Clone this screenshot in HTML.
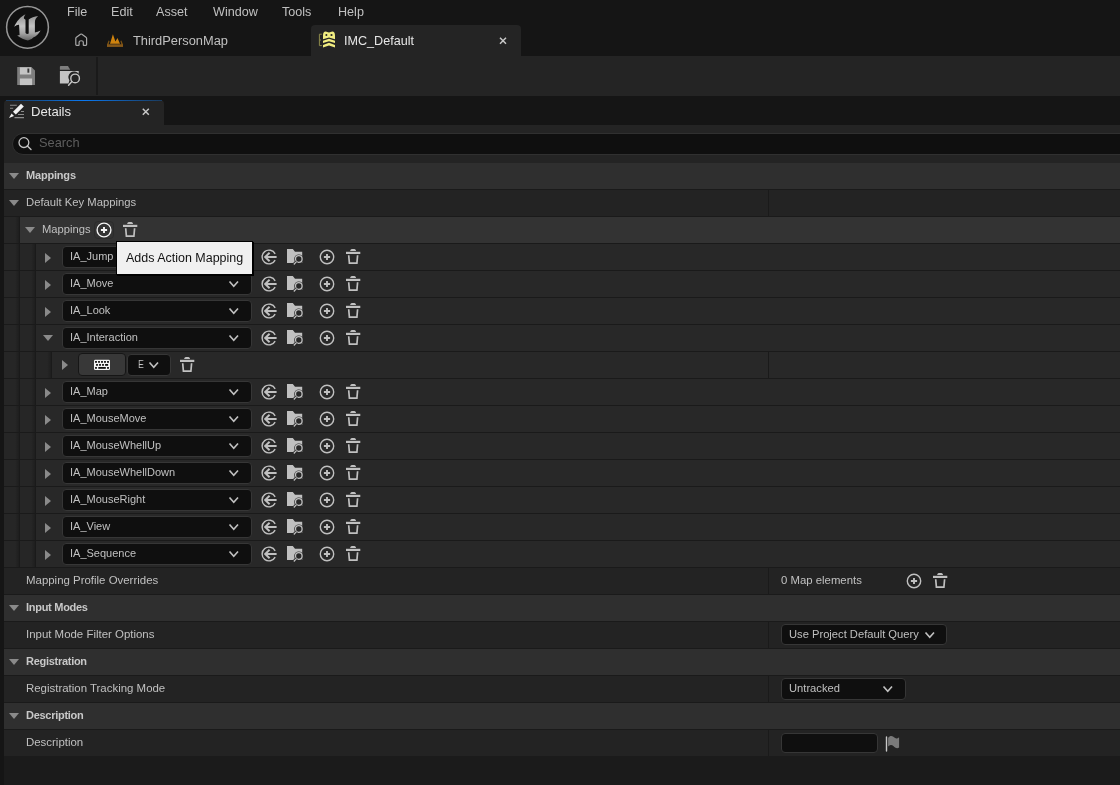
<!DOCTYPE html>
<html><head><meta charset="utf-8">
<style>
*{margin:0;padding:0;box-sizing:border-box}
html,body{width:1120px;height:785px;overflow:hidden;background:#151515;font-family:"Liberation Sans",sans-serif;color:#c0c0c0}
.a{position:absolute}
.t{position:absolute;white-space:nowrap;line-height:1;font-family:"Liberation Sans",sans-serif;will-change:transform}
svg{overflow:visible}
</style></head>
<body>
<div class="a" style="left:0px;top:0px;width:1120px;height:56px;background:#151515;"></div>
<div class="a" style="left:0px;top:56px;width:1120px;height:40px;background:#242424;"></div>
<div class="a" style="left:0px;top:96px;width:1120px;height:29px;background:#151515;"></div>
<div class="a" style="left:4px;top:125px;width:1116px;height:632px;background:#242424;"></div>
<div class="a" style="left:4px;top:756px;width:1116px;height:29px;background:#1b1b1b;"></div>
<svg class="a" style="left:0;top:0" width="56" height="56" viewBox="0 0 56 56">
<defs><linearGradient id="ug" x1="0" y1="0" x2="0" y2="1"><stop offset="0" stop-color="#8c8c8c"/><stop offset="0.45" stop-color="#c4c4c4"/><stop offset="0.72" stop-color="#a4a4a4"/><stop offset="1" stop-color="#626262"/></linearGradient></defs>
<circle cx="27.5" cy="27.3" r="20.9" fill="#101010" stroke="#979797" stroke-width="1.5"/>
<path d="M14.2,26.7 C16.5,21.5 20.5,16.5 25.5,14.2 C24.3,15.8 23.8,17.2 23.9,18.5 L25.5,19.8 L25.5,33 C26.5,34.2 27.8,34.2 28.7,33.5 L28.7,19.6 C31,17.5 34.5,16.3 38.1,15.9 C36,17.8 35,19.5 34.9,22 L34.9,32.4 C36.8,32 38.8,31.3 40.6,30.4 C38.5,33.8 35.8,36.5 33.6,37.3 L31.6,38.9 L27.9,40.6 C24.5,39.8 20.5,38.2 17.2,35.6 C18,35.3 18.8,35 19.6,34.9 L19.1,25.2 C18.8,24.2 16.5,25 14.2,26.7 Z" fill="url(#ug)"/>
</svg>
<div class="t" style="left:67px;top:6.33px;font-size:12.6px;color:#c0c0c0;">File</div>
<div class="t" style="left:111px;top:6.33px;font-size:12.6px;color:#c0c0c0;">Edit</div>
<div class="t" style="left:156px;top:6.33px;font-size:12.6px;color:#c0c0c0;">Asset</div>
<div class="t" style="left:213px;top:6.33px;font-size:12.6px;color:#c0c0c0;">Window</div>
<div class="t" style="left:282px;top:6.33px;font-size:12.6px;color:#c0c0c0;">Tools</div>
<div class="t" style="left:338px;top:6.33px;font-size:12.6px;color:#c0c0c0;">Help</div>
<svg class="a" style="left:70px;top:28px" width="24" height="24" viewBox="70 28 24 24">
<path d="M76.5,45.3 C75.9,45.3 75.8,45 75.8,44.5 V38.3 C75.8,37.8 76,37.5 76.4,37.2 L80.5,34.2 C81,33.9 81.4,33.9 81.9,34.2 L86,37.2 C86.4,37.5 86.6,37.8 86.6,38.3 V44.5 C86.6,45 86.5,45.3 85.9,45.3 H83.8 C83.4,45.3 83.3,45.1 83.3,44.7 V42 C83.3,40.3 79.1,40.3 79.1,42 V44.7 C79.1,45.1 79,45.3 78.6,45.3 Z" fill="none" stroke="#a8a8a8" stroke-width="1.2"/>
</svg>
<svg class="a" style="left:104px;top:30px" width="22" height="20" viewBox="104 30 22 20">
<path d="M110,43.7 L112.9,34.2 L115.4,41.6 L117.5,37.9 L120,43.7 Z" fill="#cf830e"/>
<path d="M107,46.8 L107,44.4 L108.6,40.6 L109.6,40.9 L108.6,44.5 H121.4 L120.4,40.9 L121.4,40.6 L123,44.4 V46.8 Z" fill="#7c5212"/>
<rect x="107" y="44.5" width="16" height="2.3" fill="#85581a"/>
</svg>
<div class="t" style="left:133px;top:35.12px;font-size:12.85px;color:#c0c0c0;">ThirdPersonMap</div>
<div class="a" style="left:311px;top:25px;width:210px;height:31px;background:#242424;border-radius:4px 4px 0 0;"></div>
<svg class="a" style="left:316px;top:29px" width="22" height="21" viewBox="316 29 22 21">
<path d="M321.8,34.2 H319.4 V45.6 H321.8 M319.4,40 H321" fill="none" stroke="#8e8b4c" stroke-width="1"/>
<path d="M323,39.2 L323,35.5 C323,33 324,31.6 325.6,31.6 C327,31.6 327.5,32.6 329,32.6 C330.5,32.6 331,31.6 332.4,31.6 C334,31.6 335,33 335,35.5 L335,39.2 L329,37.4 Z" fill="#f0ec80"/>
<circle cx="326.4" cy="35" r="1" fill="#242424"/><circle cx="331.5" cy="35" r="1.1" fill="#242424"/>
<path d="M323,40.7 L329,38.8 L335,40.7 L335,43.1 L329,41.3 L323,43.1 Z" fill="#f0ec80"/>
<path d="M323,44.9 L329,42.8 L335,44.9 L335,47.4 L329,45.5 L323,47.4 Z" fill="#f0ec80"/>
</svg>
<div class="t" style="left:344px;top:35.33px;font-size:12.6px;color:#e6e6e6;">IMC_Default</div>
<svg class="a" style="left:498px;top:36px" width="10" height="10" viewBox="498 36 10 10">
<path d="M500,37.7 L506,43.7 M506,37.7 L500,43.7" stroke="#c8c8c8" stroke-width="1.5"/>
</svg>
<svg class="a" style="left:14px;top:64px" width="72" height="26" viewBox="14 64 72 26">
<path d="M17.2,67 H31.4 L35,70.6 V85.1 H17.2 Z" fill="#7e7e7e"/>
<rect x="19.9" y="67.3" width="11.3" height="7.2" fill="#c4c4c4"/>
<rect x="27.4" y="68.5" width="1.9" height="4.2" fill="#3a3a3a"/>
<rect x="19.9" y="78.5" width="12.2" height="6.6" fill="#c4c4c4"/>
<path d="M59.9,69.8 V66.8 C59.9,66.3 60.2,66 60.7,66 H68 L70.2,69.8 Z" fill="#7e7e7e"/>
<path d="M59.9,70.9 H78.7 V73.8 A5.6,5.6 0 0 0 69.4,80.5 L68.5,83.5 H59.9 Z" fill="#c4c4c4"/>
<circle cx="75.1" cy="78.4" r="4.3" fill="none" stroke="#c4c4c4" stroke-width="1.4"/>
<path d="M71.9,81.6 L68.6,85.2" stroke="#c4c4c4" stroke-width="1.5" stroke-linecap="round"/>
</svg>
<div class="a" style="left:96px;top:57px;width:2px;height:38px;background:#1a1a1a;"></div>
<div class="a" style="left:4px;top:100px;width:160px;height:25px;background:#242424;border-radius:4px 4px 0 0;"></div>
<div class="a" style="left:6px;top:100px;width:156px;height:1px;background:linear-gradient(90deg,#1b3b5e 0%,#0a78f0 50%,#1b3b5e 100%);"></div>
<svg class="a" style="left:6px;top:101px" width="22" height="22" viewBox="6 101 22 22">
<path d="M10,105.2 H16.8 M10,108.3 H13.2 M21,111.5 H24 M18,114.5 H24 M14.5,117.6 H24" stroke="#8c8c8c" stroke-width="1.1"/>
<path d="M13,111.8 L21,103.8 L23.8,106.6 L15.8,114.6 Z" fill="#f2f2f2"/>
<path d="M11.6,113.6 L14,116 L9,117.9 Z" fill="#f2f2f2"/>
</svg>
<div class="t" style="left:31px;top:105.11px;font-size:13.1px;color:#e8e8e8;">Details</div>
<svg class="a" style="left:140px;top:106px" width="12" height="12" viewBox="140 106 12 12">
<path d="M142.8,108.7 L148.8,114.7 M148.8,108.7 L142.8,114.7" stroke="#c8c8c8" stroke-width="1.5"/>
</svg>
<div class="a" style="left:12px;top:133px;width:1130px;height:22px;background:#0f0f0f;border:1px solid #303030;border-radius:11px;box-sizing:border-box;"></div>
<svg class="a" style="left:14px;top:134px" width="22" height="20" viewBox="14 134 22 20">
<circle cx="23.9" cy="142.6" r="4.9" fill="none" stroke="#c4c4c4" stroke-width="1.3"/>
<path d="M27.4,146.1 L31,149.6" stroke="#c4c4c4" stroke-width="1.4" stroke-linecap="round"/>
</svg>
<div class="t" style="left:39px;top:136.76px;font-size:12.8px;color:#5e5e5e;">Search</div>
<div class="a" style="left:4px;top:163px;width:1116px;height:26px;background:#2f2f2f;"></div>
<div class="a" style="left:4px;top:189px;width:1116px;height:1px;background:#1a1a1a;"></div>
<svg class="a" style="left:9px;top:173px" width="10" height="6" viewBox="0 0 10 6"><path d="M0,0 H10 L5,6 Z" fill="#8a8a8a"/></svg>
<div class="t" style="left:26px;top:169.69px;font-size:11px;color:#c8c8c8;font-weight:700;letter-spacing:-0.19px;">Mappings</div>
<div class="a" style="left:4px;top:190px;width:1116px;height:26px;background:#232323;"></div>
<div class="a" style="left:4px;top:216px;width:1116px;height:1px;background:#1a1a1a;"></div>
<div class="a" style="left:768px;top:190px;width:1px;height:26px;background:#1a1a1a;"></div>
<svg class="a" style="left:9px;top:200px" width="10" height="6" viewBox="0 0 10 6"><path d="M0,0 H10 L5,6 Z" fill="#8a8a8a"/></svg>
<div class="t" style="left:26px;top:197.05px;font-size:11.28px;color:#c0c0c0;">Default Key Mappings</div>
<div class="a" style="left:4px;top:217px;width:16px;height:27px;background:linear-gradient(90deg,#262626 0%,#262626 70%,#1c1c1c 100%);"></div>
<div class="a" style="left:19px;top:217px;width:1px;height:27px;background:#1a1a1a;"></div>
<div class="a" style="left:4px;top:243px;width:16px;height:1px;background:#1a1a1a;"></div>
<div class="a" style="left:20px;top:217px;width:1100px;height:26px;background:#333333;"></div>
<div class="a" style="left:20px;top:243px;width:1100px;height:1px;background:#1a1a1a;"></div>
<svg class="a" style="left:25px;top:227px" width="10" height="6" viewBox="0 0 10 6"><path d="M0,0 H10 L5,6 Z" fill="#8a8a8a"/></svg>
<div class="t" style="left:42px;top:223.52px;font-size:11.2px;color:#c0c0c0;">Mappings</div>
<div class="a" style="left:94px;top:221px;width:20px;height:18px;background:transparent;border:1px solid #2b2b2b;border-radius:4px;box-sizing:border-box;"></div>
<svg class="a" style="left:95px;top:220.8px" width="18" height="18" viewBox="95 220.8 18 18"><circle cx="104" cy="229.8" r="6.9" fill="none" stroke="#f4f4f4" stroke-width="1.4"/><path d="M100.9,229.8 H107.1 M104,226.70000000000002 V232.9" stroke="#f4f4f4" stroke-width="1.9"/></svg>
<svg class="a" style="left:121px;top:220px" width="19" height="19" viewBox="121 220 19 19"><path d="M127.2,224 C127.2,222.6 128,222 130.1,222 C132.2,222 133,222.6 133,224 Z" fill="#c0c0c0"/><rect x="123" y="224.8" width="14.3" height="2.2" fill="#c0c0c0"/><path d="M125.7,228.2 L126.4,236.2 H133.9 L134.6,228.2" fill="none" stroke="#c0c0c0" stroke-width="1.7"/></svg>
<div class="a" style="left:4px;top:244px;width:16px;height:27px;background:linear-gradient(90deg,#262626 0%,#262626 70%,#1c1c1c 100%);"></div>
<div class="a" style="left:19px;top:244px;width:1px;height:27px;background:#1a1a1a;"></div>
<div class="a" style="left:4px;top:270px;width:16px;height:1px;background:#1a1a1a;"></div>
<div class="a" style="left:20px;top:244px;width:16px;height:27px;background:linear-gradient(90deg,#262626 0%,#262626 70%,#1c1c1c 100%);"></div>
<div class="a" style="left:35px;top:244px;width:1px;height:27px;background:#1a1a1a;"></div>
<div class="a" style="left:20px;top:270px;width:16px;height:1px;background:#1a1a1a;"></div>
<div class="a" style="left:36px;top:244px;width:1084px;height:26px;background:#282828;"></div>
<div class="a" style="left:36px;top:270px;width:1084px;height:1px;background:#1a1a1a;"></div>
<svg class="a" style="left:45px;top:252.5px" width="6" height="10" viewBox="0 0 6 10"><path d="M0,0 V10 L6,5 Z" fill="#8a8a8a"/></svg>
<div class="a" style="left:62px;top:246px;width:190px;height:22px;background:#0f0f0f;border:1px solid #363636;border-radius:4px;box-sizing:border-box;"></div>
<div class="t" style="left:70px;top:250.89px;font-size:11px;color:#c0c0c0;">IA_Jump</div>
<svg class="a" style="left:228.1px;top:253px" width="11.5" height="7.5" viewBox="228.1 253 11.5 7.5"><path d="M229.6,254.5 L233.85,259.2 L238.1,254.5" fill="none" stroke="#c0c0c0" stroke-width="1.65"/></svg>
<svg class="a" style="left:259.6px;top:248px" width="18" height="18" viewBox="259.6 248 18 18"><path d="M274.75,253.87 A6.9,6.9 0 1 0 274.75,260.13" fill="none" stroke="#c0c0c0" stroke-width="1.4"/><path d="M264.8,257 H276.20000000000005" stroke="#c0c0c0" stroke-width="2"/><path d="M269.20000000000005,252.7 L264.8,257 L269.20000000000005,261.3" fill="none" stroke="#c0c0c0" stroke-width="2"/></svg>
<svg class="a" style="left:286px;top:248px" width="18" height="18" viewBox="286 248 18 18"><path d="M287,249 H292.8 L295,251.7 H302.2 V263 H287 Z" fill="#c0c0c0"/><circle cx="298.8" cy="259" r="4.6" fill="#282828"/><circle cx="298.8" cy="259" r="3.3" fill="none" stroke="#c0c0c0" stroke-width="1.3"/><path d="M296.5,261.6 L293.8,264.5" stroke="#282828" stroke-width="3"/><path d="M296.5,261.6 L293.8,264.5" stroke="#c0c0c0" stroke-width="1.2"/></svg>
<svg class="a" style="left:318px;top:248px" width="18" height="18" viewBox="318 248 18 18"><circle cx="327" cy="257" r="6.7" fill="none" stroke="#c0c0c0" stroke-width="1.4"/><path d="M323.9,257 H330.1 M327,253.9 V260.1" stroke="#c0c0c0" stroke-width="1.9"/></svg>
<svg class="a" style="left:344px;top:247px" width="19" height="19" viewBox="344 247 19 19"><path d="M350.2,251 C350.2,249.6 351,249 353.1,249 C355.2,249 356,249.6 356,251 Z" fill="#c0c0c0"/><rect x="346" y="251.8" width="14.3" height="2.2" fill="#c0c0c0"/><path d="M348.7,255.2 L349.4,263.2 H356.9 L357.6,255.2" fill="none" stroke="#c0c0c0" stroke-width="1.7"/></svg>
<div class="a" style="left:4px;top:271px;width:16px;height:27px;background:linear-gradient(90deg,#262626 0%,#262626 70%,#1c1c1c 100%);"></div>
<div class="a" style="left:19px;top:271px;width:1px;height:27px;background:#1a1a1a;"></div>
<div class="a" style="left:4px;top:297px;width:16px;height:1px;background:#1a1a1a;"></div>
<div class="a" style="left:20px;top:271px;width:16px;height:27px;background:linear-gradient(90deg,#262626 0%,#262626 70%,#1c1c1c 100%);"></div>
<div class="a" style="left:35px;top:271px;width:1px;height:27px;background:#1a1a1a;"></div>
<div class="a" style="left:20px;top:297px;width:16px;height:1px;background:#1a1a1a;"></div>
<div class="a" style="left:36px;top:271px;width:1084px;height:26px;background:#282828;"></div>
<div class="a" style="left:36px;top:297px;width:1084px;height:1px;background:#1a1a1a;"></div>
<svg class="a" style="left:45px;top:279.5px" width="6" height="10" viewBox="0 0 6 10"><path d="M0,0 V10 L6,5 Z" fill="#8a8a8a"/></svg>
<div class="a" style="left:62px;top:273px;width:190px;height:22px;background:#0f0f0f;border:1px solid #363636;border-radius:4px;box-sizing:border-box;"></div>
<div class="t" style="left:70px;top:277.89px;font-size:11px;color:#c0c0c0;">IA_Move</div>
<svg class="a" style="left:228.1px;top:280px" width="11.5" height="7.5" viewBox="228.1 280 11.5 7.5"><path d="M229.6,281.5 L233.85,286.2 L238.1,281.5" fill="none" stroke="#c0c0c0" stroke-width="1.65"/></svg>
<svg class="a" style="left:259.6px;top:275px" width="18" height="18" viewBox="259.6 275 18 18"><path d="M274.75,280.87 A6.9,6.9 0 1 0 274.75,287.13" fill="none" stroke="#c0c0c0" stroke-width="1.4"/><path d="M264.8,284 H276.20000000000005" stroke="#c0c0c0" stroke-width="2"/><path d="M269.20000000000005,279.7 L264.8,284 L269.20000000000005,288.3" fill="none" stroke="#c0c0c0" stroke-width="2"/></svg>
<svg class="a" style="left:286px;top:275px" width="18" height="18" viewBox="286 275 18 18"><path d="M287,276 H292.8 L295,278.7 H302.2 V290 H287 Z" fill="#c0c0c0"/><circle cx="298.8" cy="286" r="4.6" fill="#282828"/><circle cx="298.8" cy="286" r="3.3" fill="none" stroke="#c0c0c0" stroke-width="1.3"/><path d="M296.5,288.6 L293.8,291.5" stroke="#282828" stroke-width="3"/><path d="M296.5,288.6 L293.8,291.5" stroke="#c0c0c0" stroke-width="1.2"/></svg>
<svg class="a" style="left:318px;top:275px" width="18" height="18" viewBox="318 275 18 18"><circle cx="327" cy="284" r="6.7" fill="none" stroke="#c0c0c0" stroke-width="1.4"/><path d="M323.9,284 H330.1 M327,280.9 V287.1" stroke="#c0c0c0" stroke-width="1.9"/></svg>
<svg class="a" style="left:344px;top:274px" width="19" height="19" viewBox="344 274 19 19"><path d="M350.2,278 C350.2,276.6 351,276 353.1,276 C355.2,276 356,276.6 356,278 Z" fill="#c0c0c0"/><rect x="346" y="278.8" width="14.3" height="2.2" fill="#c0c0c0"/><path d="M348.7,282.2 L349.4,290.2 H356.9 L357.6,282.2" fill="none" stroke="#c0c0c0" stroke-width="1.7"/></svg>
<div class="a" style="left:4px;top:298px;width:16px;height:27px;background:linear-gradient(90deg,#262626 0%,#262626 70%,#1c1c1c 100%);"></div>
<div class="a" style="left:19px;top:298px;width:1px;height:27px;background:#1a1a1a;"></div>
<div class="a" style="left:4px;top:324px;width:16px;height:1px;background:#1a1a1a;"></div>
<div class="a" style="left:20px;top:298px;width:16px;height:27px;background:linear-gradient(90deg,#262626 0%,#262626 70%,#1c1c1c 100%);"></div>
<div class="a" style="left:35px;top:298px;width:1px;height:27px;background:#1a1a1a;"></div>
<div class="a" style="left:20px;top:324px;width:16px;height:1px;background:#1a1a1a;"></div>
<div class="a" style="left:36px;top:298px;width:1084px;height:26px;background:#282828;"></div>
<div class="a" style="left:36px;top:324px;width:1084px;height:1px;background:#1a1a1a;"></div>
<svg class="a" style="left:45px;top:306.5px" width="6" height="10" viewBox="0 0 6 10"><path d="M0,0 V10 L6,5 Z" fill="#8a8a8a"/></svg>
<div class="a" style="left:62px;top:300px;width:190px;height:22px;background:#0f0f0f;border:1px solid #363636;border-radius:4px;box-sizing:border-box;"></div>
<div class="t" style="left:70px;top:304.89px;font-size:11px;color:#c0c0c0;">IA_Look</div>
<svg class="a" style="left:228.1px;top:307px" width="11.5" height="7.5" viewBox="228.1 307 11.5 7.5"><path d="M229.6,308.5 L233.85,313.2 L238.1,308.5" fill="none" stroke="#c0c0c0" stroke-width="1.65"/></svg>
<svg class="a" style="left:259.6px;top:302px" width="18" height="18" viewBox="259.6 302 18 18"><path d="M274.75,307.87 A6.9,6.9 0 1 0 274.75,314.13" fill="none" stroke="#c0c0c0" stroke-width="1.4"/><path d="M264.8,311 H276.20000000000005" stroke="#c0c0c0" stroke-width="2"/><path d="M269.20000000000005,306.7 L264.8,311 L269.20000000000005,315.3" fill="none" stroke="#c0c0c0" stroke-width="2"/></svg>
<svg class="a" style="left:286px;top:302px" width="18" height="18" viewBox="286 302 18 18"><path d="M287,303 H292.8 L295,305.7 H302.2 V317 H287 Z" fill="#c0c0c0"/><circle cx="298.8" cy="313" r="4.6" fill="#282828"/><circle cx="298.8" cy="313" r="3.3" fill="none" stroke="#c0c0c0" stroke-width="1.3"/><path d="M296.5,315.6 L293.8,318.5" stroke="#282828" stroke-width="3"/><path d="M296.5,315.6 L293.8,318.5" stroke="#c0c0c0" stroke-width="1.2"/></svg>
<svg class="a" style="left:318px;top:302px" width="18" height="18" viewBox="318 302 18 18"><circle cx="327" cy="311" r="6.7" fill="none" stroke="#c0c0c0" stroke-width="1.4"/><path d="M323.9,311 H330.1 M327,307.9 V314.1" stroke="#c0c0c0" stroke-width="1.9"/></svg>
<svg class="a" style="left:344px;top:301px" width="19" height="19" viewBox="344 301 19 19"><path d="M350.2,305 C350.2,303.6 351,303 353.1,303 C355.2,303 356,303.6 356,305 Z" fill="#c0c0c0"/><rect x="346" y="305.8" width="14.3" height="2.2" fill="#c0c0c0"/><path d="M348.7,309.2 L349.4,317.2 H356.9 L357.6,309.2" fill="none" stroke="#c0c0c0" stroke-width="1.7"/></svg>
<div class="a" style="left:4px;top:325px;width:16px;height:27px;background:linear-gradient(90deg,#262626 0%,#262626 70%,#1c1c1c 100%);"></div>
<div class="a" style="left:19px;top:325px;width:1px;height:27px;background:#1a1a1a;"></div>
<div class="a" style="left:4px;top:351px;width:16px;height:1px;background:#1a1a1a;"></div>
<div class="a" style="left:20px;top:325px;width:16px;height:27px;background:linear-gradient(90deg,#262626 0%,#262626 70%,#1c1c1c 100%);"></div>
<div class="a" style="left:35px;top:325px;width:1px;height:27px;background:#1a1a1a;"></div>
<div class="a" style="left:20px;top:351px;width:16px;height:1px;background:#1a1a1a;"></div>
<div class="a" style="left:36px;top:325px;width:1084px;height:26px;background:#282828;"></div>
<div class="a" style="left:36px;top:351px;width:1084px;height:1px;background:#1a1a1a;"></div>
<svg class="a" style="left:43px;top:335px" width="10" height="6" viewBox="0 0 10 6"><path d="M0,0 H10 L5,6 Z" fill="#8a8a8a"/></svg>
<div class="a" style="left:62px;top:327px;width:190px;height:22px;background:#0f0f0f;border:1px solid #363636;border-radius:4px;box-sizing:border-box;"></div>
<div class="t" style="left:70px;top:331.89px;font-size:11px;color:#c0c0c0;">IA_Interaction</div>
<svg class="a" style="left:228.1px;top:334px" width="11.5" height="7.5" viewBox="228.1 334 11.5 7.5"><path d="M229.6,335.5 L233.85,340.2 L238.1,335.5" fill="none" stroke="#c0c0c0" stroke-width="1.65"/></svg>
<svg class="a" style="left:259.6px;top:329px" width="18" height="18" viewBox="259.6 329 18 18"><path d="M274.75,334.87 A6.9,6.9 0 1 0 274.75,341.13" fill="none" stroke="#c0c0c0" stroke-width="1.4"/><path d="M264.8,338 H276.20000000000005" stroke="#c0c0c0" stroke-width="2"/><path d="M269.20000000000005,333.7 L264.8,338 L269.20000000000005,342.3" fill="none" stroke="#c0c0c0" stroke-width="2"/></svg>
<svg class="a" style="left:286px;top:329px" width="18" height="18" viewBox="286 329 18 18"><path d="M287,330 H292.8 L295,332.7 H302.2 V344 H287 Z" fill="#c0c0c0"/><circle cx="298.8" cy="340" r="4.6" fill="#282828"/><circle cx="298.8" cy="340" r="3.3" fill="none" stroke="#c0c0c0" stroke-width="1.3"/><path d="M296.5,342.6 L293.8,345.5" stroke="#282828" stroke-width="3"/><path d="M296.5,342.6 L293.8,345.5" stroke="#c0c0c0" stroke-width="1.2"/></svg>
<svg class="a" style="left:318px;top:329px" width="18" height="18" viewBox="318 329 18 18"><circle cx="327" cy="338" r="6.7" fill="none" stroke="#c0c0c0" stroke-width="1.4"/><path d="M323.9,338 H330.1 M327,334.9 V341.1" stroke="#c0c0c0" stroke-width="1.9"/></svg>
<svg class="a" style="left:344px;top:328px" width="19" height="19" viewBox="344 328 19 19"><path d="M350.2,332 C350.2,330.6 351,330 353.1,330 C355.2,330 356,330.6 356,332 Z" fill="#c0c0c0"/><rect x="346" y="332.8" width="14.3" height="2.2" fill="#c0c0c0"/><path d="M348.7,336.2 L349.4,344.2 H356.9 L357.6,336.2" fill="none" stroke="#c0c0c0" stroke-width="1.7"/></svg>
<div class="a" style="left:4px;top:352px;width:16px;height:27px;background:linear-gradient(90deg,#262626 0%,#262626 70%,#1c1c1c 100%);"></div>
<div class="a" style="left:19px;top:352px;width:1px;height:27px;background:#1a1a1a;"></div>
<div class="a" style="left:4px;top:378px;width:16px;height:1px;background:#1a1a1a;"></div>
<div class="a" style="left:20px;top:352px;width:16px;height:27px;background:linear-gradient(90deg,#262626 0%,#262626 70%,#1c1c1c 100%);"></div>
<div class="a" style="left:35px;top:352px;width:1px;height:27px;background:#1a1a1a;"></div>
<div class="a" style="left:20px;top:378px;width:16px;height:1px;background:#1a1a1a;"></div>
<div class="a" style="left:36px;top:352px;width:16px;height:27px;background:linear-gradient(90deg,#262626 0%,#262626 70%,#1c1c1c 100%);"></div>
<div class="a" style="left:51px;top:352px;width:1px;height:27px;background:#1a1a1a;"></div>
<div class="a" style="left:36px;top:378px;width:16px;height:1px;background:#1a1a1a;"></div>
<div class="a" style="left:52px;top:352px;width:1068px;height:26px;background:#282828;"></div>
<div class="a" style="left:52px;top:378px;width:1068px;height:1px;background:#1a1a1a;"></div>
<div class="a" style="left:768px;top:352px;width:1px;height:26px;background:#1a1a1a;"></div>
<svg class="a" style="left:61.5px;top:360px" width="6" height="10" viewBox="0 0 6 10"><path d="M0,0 V10 L6,5 Z" fill="#8a8a8a"/></svg>
<div class="a" style="left:78px;top:353px;width:48px;height:23px;background:#383838;border:1px solid #161616;border-radius:4px;box-sizing:border-box;"></div>
<svg class="a" style="left:92px;top:358px" width="20" height="14" viewBox="92 358 20 14"><rect x="94" y="359.8" width="16" height="10.2" rx="1.3" fill="#f4f4f4"/><rect x="95.10" y="361" width="1.8" height="1.8" fill="#101010"/><rect x="98.10" y="361" width="1.8" height="1.8" fill="#101010"/><rect x="101.10" y="361" width="1.8" height="1.8" fill="#101010"/><rect x="104.10" y="361" width="1.8" height="1.8" fill="#101010"/><rect x="107.10" y="361" width="1.8" height="1.8" fill="#101010"/><rect x="96.10" y="364" width="1.8" height="1.8" fill="#101010"/><rect x="99.10" y="364" width="1.8" height="1.8" fill="#101010"/><rect x="102.10" y="364" width="1.8" height="1.8" fill="#101010"/><rect x="105.1" y="364" width="3" height="1.8" fill="#101010"/><rect x="95.1" y="367" width="1.8" height="1.8" fill="#101010"/><rect x="98.3" y="367" width="7.5" height="1.8" fill="#101010"/><rect x="107.1" y="367" width="1.8" height="1.8" fill="#101010"/></svg>
<div class="a" style="left:127px;top:353.5px;width:44.3px;height:22px;background:#0f0f0f;border:1px solid #363636;border-radius:4px;box-sizing:border-box;"></div>
<div class="t" style="left:138px;top:359.19px;font-size:11px;color:#c8c8c8;transform:scaleX(0.78);transform-origin:0 0;">E</div>
<svg class="a" style="left:148.2px;top:361px" width="11.5" height="7.5" viewBox="148.2 361 11.5 7.5"><path d="M149.7,362.5 L153.95,367.2 L158.2,362.5" fill="none" stroke="#c0c0c0" stroke-width="1.65"/></svg>
<svg class="a" style="left:178.3px;top:355.2px" width="19" height="19" viewBox="178.3 355.2 19 19"><path d="M184.5,359.2 C184.5,357.8 185.3,357.2 187.4,357.2 C189.5,357.2 190.3,357.8 190.3,359.2 Z" fill="#c0c0c0"/><rect x="180.3" y="360.0" width="14.3" height="2.2" fill="#c0c0c0"/><path d="M183.0,363.4 L183.70000000000002,371.4 H191.20000000000002 L191.9,363.4" fill="none" stroke="#c0c0c0" stroke-width="1.7"/></svg>
<div class="a" style="left:4px;top:379px;width:16px;height:27px;background:linear-gradient(90deg,#262626 0%,#262626 70%,#1c1c1c 100%);"></div>
<div class="a" style="left:19px;top:379px;width:1px;height:27px;background:#1a1a1a;"></div>
<div class="a" style="left:4px;top:405px;width:16px;height:1px;background:#1a1a1a;"></div>
<div class="a" style="left:20px;top:379px;width:16px;height:27px;background:linear-gradient(90deg,#262626 0%,#262626 70%,#1c1c1c 100%);"></div>
<div class="a" style="left:35px;top:379px;width:1px;height:27px;background:#1a1a1a;"></div>
<div class="a" style="left:20px;top:405px;width:16px;height:1px;background:#1a1a1a;"></div>
<div class="a" style="left:36px;top:379px;width:1084px;height:26px;background:#282828;"></div>
<div class="a" style="left:36px;top:405px;width:1084px;height:1px;background:#1a1a1a;"></div>
<svg class="a" style="left:45px;top:387.5px" width="6" height="10" viewBox="0 0 6 10"><path d="M0,0 V10 L6,5 Z" fill="#8a8a8a"/></svg>
<div class="a" style="left:62px;top:381px;width:190px;height:22px;background:#0f0f0f;border:1px solid #363636;border-radius:4px;box-sizing:border-box;"></div>
<div class="t" style="left:70px;top:385.89px;font-size:11px;color:#c0c0c0;">IA_Map</div>
<svg class="a" style="left:228.1px;top:388px" width="11.5" height="7.5" viewBox="228.1 388 11.5 7.5"><path d="M229.6,389.5 L233.85,394.2 L238.1,389.5" fill="none" stroke="#c0c0c0" stroke-width="1.65"/></svg>
<svg class="a" style="left:259.6px;top:383px" width="18" height="18" viewBox="259.6 383 18 18"><path d="M274.75,388.87 A6.9,6.9 0 1 0 274.75,395.13" fill="none" stroke="#c0c0c0" stroke-width="1.4"/><path d="M264.8,392 H276.20000000000005" stroke="#c0c0c0" stroke-width="2"/><path d="M269.20000000000005,387.7 L264.8,392 L269.20000000000005,396.3" fill="none" stroke="#c0c0c0" stroke-width="2"/></svg>
<svg class="a" style="left:286px;top:383px" width="18" height="18" viewBox="286 383 18 18"><path d="M287,384 H292.8 L295,386.7 H302.2 V398 H287 Z" fill="#c0c0c0"/><circle cx="298.8" cy="394" r="4.6" fill="#282828"/><circle cx="298.8" cy="394" r="3.3" fill="none" stroke="#c0c0c0" stroke-width="1.3"/><path d="M296.5,396.6 L293.8,399.5" stroke="#282828" stroke-width="3"/><path d="M296.5,396.6 L293.8,399.5" stroke="#c0c0c0" stroke-width="1.2"/></svg>
<svg class="a" style="left:318px;top:383px" width="18" height="18" viewBox="318 383 18 18"><circle cx="327" cy="392" r="6.7" fill="none" stroke="#c0c0c0" stroke-width="1.4"/><path d="M323.9,392 H330.1 M327,388.9 V395.1" stroke="#c0c0c0" stroke-width="1.9"/></svg>
<svg class="a" style="left:344px;top:382px" width="19" height="19" viewBox="344 382 19 19"><path d="M350.2,386 C350.2,384.6 351,384 353.1,384 C355.2,384 356,384.6 356,386 Z" fill="#c0c0c0"/><rect x="346" y="386.8" width="14.3" height="2.2" fill="#c0c0c0"/><path d="M348.7,390.2 L349.4,398.2 H356.9 L357.6,390.2" fill="none" stroke="#c0c0c0" stroke-width="1.7"/></svg>
<div class="a" style="left:4px;top:406px;width:16px;height:27px;background:linear-gradient(90deg,#262626 0%,#262626 70%,#1c1c1c 100%);"></div>
<div class="a" style="left:19px;top:406px;width:1px;height:27px;background:#1a1a1a;"></div>
<div class="a" style="left:4px;top:432px;width:16px;height:1px;background:#1a1a1a;"></div>
<div class="a" style="left:20px;top:406px;width:16px;height:27px;background:linear-gradient(90deg,#262626 0%,#262626 70%,#1c1c1c 100%);"></div>
<div class="a" style="left:35px;top:406px;width:1px;height:27px;background:#1a1a1a;"></div>
<div class="a" style="left:20px;top:432px;width:16px;height:1px;background:#1a1a1a;"></div>
<div class="a" style="left:36px;top:406px;width:1084px;height:26px;background:#282828;"></div>
<div class="a" style="left:36px;top:432px;width:1084px;height:1px;background:#1a1a1a;"></div>
<svg class="a" style="left:45px;top:414.5px" width="6" height="10" viewBox="0 0 6 10"><path d="M0,0 V10 L6,5 Z" fill="#8a8a8a"/></svg>
<div class="a" style="left:62px;top:408px;width:190px;height:22px;background:#0f0f0f;border:1px solid #363636;border-radius:4px;box-sizing:border-box;"></div>
<div class="t" style="left:70px;top:412.89px;font-size:11px;color:#c0c0c0;">IA_MouseMove</div>
<svg class="a" style="left:228.1px;top:415px" width="11.5" height="7.5" viewBox="228.1 415 11.5 7.5"><path d="M229.6,416.5 L233.85,421.2 L238.1,416.5" fill="none" stroke="#c0c0c0" stroke-width="1.65"/></svg>
<svg class="a" style="left:259.6px;top:410px" width="18" height="18" viewBox="259.6 410 18 18"><path d="M274.75,415.87 A6.9,6.9 0 1 0 274.75,422.13" fill="none" stroke="#c0c0c0" stroke-width="1.4"/><path d="M264.8,419 H276.20000000000005" stroke="#c0c0c0" stroke-width="2"/><path d="M269.20000000000005,414.7 L264.8,419 L269.20000000000005,423.3" fill="none" stroke="#c0c0c0" stroke-width="2"/></svg>
<svg class="a" style="left:286px;top:410px" width="18" height="18" viewBox="286 410 18 18"><path d="M287,411 H292.8 L295,413.7 H302.2 V425 H287 Z" fill="#c0c0c0"/><circle cx="298.8" cy="421" r="4.6" fill="#282828"/><circle cx="298.8" cy="421" r="3.3" fill="none" stroke="#c0c0c0" stroke-width="1.3"/><path d="M296.5,423.6 L293.8,426.5" stroke="#282828" stroke-width="3"/><path d="M296.5,423.6 L293.8,426.5" stroke="#c0c0c0" stroke-width="1.2"/></svg>
<svg class="a" style="left:318px;top:410px" width="18" height="18" viewBox="318 410 18 18"><circle cx="327" cy="419" r="6.7" fill="none" stroke="#c0c0c0" stroke-width="1.4"/><path d="M323.9,419 H330.1 M327,415.9 V422.1" stroke="#c0c0c0" stroke-width="1.9"/></svg>
<svg class="a" style="left:344px;top:409px" width="19" height="19" viewBox="344 409 19 19"><path d="M350.2,413 C350.2,411.6 351,411 353.1,411 C355.2,411 356,411.6 356,413 Z" fill="#c0c0c0"/><rect x="346" y="413.8" width="14.3" height="2.2" fill="#c0c0c0"/><path d="M348.7,417.2 L349.4,425.2 H356.9 L357.6,417.2" fill="none" stroke="#c0c0c0" stroke-width="1.7"/></svg>
<div class="a" style="left:4px;top:433px;width:16px;height:27px;background:linear-gradient(90deg,#262626 0%,#262626 70%,#1c1c1c 100%);"></div>
<div class="a" style="left:19px;top:433px;width:1px;height:27px;background:#1a1a1a;"></div>
<div class="a" style="left:4px;top:459px;width:16px;height:1px;background:#1a1a1a;"></div>
<div class="a" style="left:20px;top:433px;width:16px;height:27px;background:linear-gradient(90deg,#262626 0%,#262626 70%,#1c1c1c 100%);"></div>
<div class="a" style="left:35px;top:433px;width:1px;height:27px;background:#1a1a1a;"></div>
<div class="a" style="left:20px;top:459px;width:16px;height:1px;background:#1a1a1a;"></div>
<div class="a" style="left:36px;top:433px;width:1084px;height:26px;background:#282828;"></div>
<div class="a" style="left:36px;top:459px;width:1084px;height:1px;background:#1a1a1a;"></div>
<svg class="a" style="left:45px;top:441.5px" width="6" height="10" viewBox="0 0 6 10"><path d="M0,0 V10 L6,5 Z" fill="#8a8a8a"/></svg>
<div class="a" style="left:62px;top:435px;width:190px;height:22px;background:#0f0f0f;border:1px solid #363636;border-radius:4px;box-sizing:border-box;"></div>
<div class="t" style="left:70px;top:439.89px;font-size:11px;color:#c0c0c0;">IA_MouseWhellUp</div>
<svg class="a" style="left:228.1px;top:442px" width="11.5" height="7.5" viewBox="228.1 442 11.5 7.5"><path d="M229.6,443.5 L233.85,448.2 L238.1,443.5" fill="none" stroke="#c0c0c0" stroke-width="1.65"/></svg>
<svg class="a" style="left:259.6px;top:437px" width="18" height="18" viewBox="259.6 437 18 18"><path d="M274.75,442.87 A6.9,6.9 0 1 0 274.75,449.13" fill="none" stroke="#c0c0c0" stroke-width="1.4"/><path d="M264.8,446 H276.20000000000005" stroke="#c0c0c0" stroke-width="2"/><path d="M269.20000000000005,441.7 L264.8,446 L269.20000000000005,450.3" fill="none" stroke="#c0c0c0" stroke-width="2"/></svg>
<svg class="a" style="left:286px;top:437px" width="18" height="18" viewBox="286 437 18 18"><path d="M287,438 H292.8 L295,440.7 H302.2 V452 H287 Z" fill="#c0c0c0"/><circle cx="298.8" cy="448" r="4.6" fill="#282828"/><circle cx="298.8" cy="448" r="3.3" fill="none" stroke="#c0c0c0" stroke-width="1.3"/><path d="M296.5,450.6 L293.8,453.5" stroke="#282828" stroke-width="3"/><path d="M296.5,450.6 L293.8,453.5" stroke="#c0c0c0" stroke-width="1.2"/></svg>
<svg class="a" style="left:318px;top:437px" width="18" height="18" viewBox="318 437 18 18"><circle cx="327" cy="446" r="6.7" fill="none" stroke="#c0c0c0" stroke-width="1.4"/><path d="M323.9,446 H330.1 M327,442.9 V449.1" stroke="#c0c0c0" stroke-width="1.9"/></svg>
<svg class="a" style="left:344px;top:436px" width="19" height="19" viewBox="344 436 19 19"><path d="M350.2,440 C350.2,438.6 351,438 353.1,438 C355.2,438 356,438.6 356,440 Z" fill="#c0c0c0"/><rect x="346" y="440.8" width="14.3" height="2.2" fill="#c0c0c0"/><path d="M348.7,444.2 L349.4,452.2 H356.9 L357.6,444.2" fill="none" stroke="#c0c0c0" stroke-width="1.7"/></svg>
<div class="a" style="left:4px;top:460px;width:16px;height:27px;background:linear-gradient(90deg,#262626 0%,#262626 70%,#1c1c1c 100%);"></div>
<div class="a" style="left:19px;top:460px;width:1px;height:27px;background:#1a1a1a;"></div>
<div class="a" style="left:4px;top:486px;width:16px;height:1px;background:#1a1a1a;"></div>
<div class="a" style="left:20px;top:460px;width:16px;height:27px;background:linear-gradient(90deg,#262626 0%,#262626 70%,#1c1c1c 100%);"></div>
<div class="a" style="left:35px;top:460px;width:1px;height:27px;background:#1a1a1a;"></div>
<div class="a" style="left:20px;top:486px;width:16px;height:1px;background:#1a1a1a;"></div>
<div class="a" style="left:36px;top:460px;width:1084px;height:26px;background:#282828;"></div>
<div class="a" style="left:36px;top:486px;width:1084px;height:1px;background:#1a1a1a;"></div>
<svg class="a" style="left:45px;top:468.5px" width="6" height="10" viewBox="0 0 6 10"><path d="M0,0 V10 L6,5 Z" fill="#8a8a8a"/></svg>
<div class="a" style="left:62px;top:462px;width:190px;height:22px;background:#0f0f0f;border:1px solid #363636;border-radius:4px;box-sizing:border-box;"></div>
<div class="t" style="left:70px;top:466.89px;font-size:11px;color:#c0c0c0;">IA_MouseWhellDown</div>
<svg class="a" style="left:228.1px;top:469px" width="11.5" height="7.5" viewBox="228.1 469 11.5 7.5"><path d="M229.6,470.5 L233.85,475.2 L238.1,470.5" fill="none" stroke="#c0c0c0" stroke-width="1.65"/></svg>
<svg class="a" style="left:259.6px;top:464px" width="18" height="18" viewBox="259.6 464 18 18"><path d="M274.75,469.87 A6.9,6.9 0 1 0 274.75,476.13" fill="none" stroke="#c0c0c0" stroke-width="1.4"/><path d="M264.8,473 H276.20000000000005" stroke="#c0c0c0" stroke-width="2"/><path d="M269.20000000000005,468.7 L264.8,473 L269.20000000000005,477.3" fill="none" stroke="#c0c0c0" stroke-width="2"/></svg>
<svg class="a" style="left:286px;top:464px" width="18" height="18" viewBox="286 464 18 18"><path d="M287,465 H292.8 L295,467.7 H302.2 V479 H287 Z" fill="#c0c0c0"/><circle cx="298.8" cy="475" r="4.6" fill="#282828"/><circle cx="298.8" cy="475" r="3.3" fill="none" stroke="#c0c0c0" stroke-width="1.3"/><path d="M296.5,477.6 L293.8,480.5" stroke="#282828" stroke-width="3"/><path d="M296.5,477.6 L293.8,480.5" stroke="#c0c0c0" stroke-width="1.2"/></svg>
<svg class="a" style="left:318px;top:464px" width="18" height="18" viewBox="318 464 18 18"><circle cx="327" cy="473" r="6.7" fill="none" stroke="#c0c0c0" stroke-width="1.4"/><path d="M323.9,473 H330.1 M327,469.9 V476.1" stroke="#c0c0c0" stroke-width="1.9"/></svg>
<svg class="a" style="left:344px;top:463px" width="19" height="19" viewBox="344 463 19 19"><path d="M350.2,467 C350.2,465.6 351,465 353.1,465 C355.2,465 356,465.6 356,467 Z" fill="#c0c0c0"/><rect x="346" y="467.8" width="14.3" height="2.2" fill="#c0c0c0"/><path d="M348.7,471.2 L349.4,479.2 H356.9 L357.6,471.2" fill="none" stroke="#c0c0c0" stroke-width="1.7"/></svg>
<div class="a" style="left:4px;top:487px;width:16px;height:27px;background:linear-gradient(90deg,#262626 0%,#262626 70%,#1c1c1c 100%);"></div>
<div class="a" style="left:19px;top:487px;width:1px;height:27px;background:#1a1a1a;"></div>
<div class="a" style="left:4px;top:513px;width:16px;height:1px;background:#1a1a1a;"></div>
<div class="a" style="left:20px;top:487px;width:16px;height:27px;background:linear-gradient(90deg,#262626 0%,#262626 70%,#1c1c1c 100%);"></div>
<div class="a" style="left:35px;top:487px;width:1px;height:27px;background:#1a1a1a;"></div>
<div class="a" style="left:20px;top:513px;width:16px;height:1px;background:#1a1a1a;"></div>
<div class="a" style="left:36px;top:487px;width:1084px;height:26px;background:#282828;"></div>
<div class="a" style="left:36px;top:513px;width:1084px;height:1px;background:#1a1a1a;"></div>
<svg class="a" style="left:45px;top:495.5px" width="6" height="10" viewBox="0 0 6 10"><path d="M0,0 V10 L6,5 Z" fill="#8a8a8a"/></svg>
<div class="a" style="left:62px;top:489px;width:190px;height:22px;background:#0f0f0f;border:1px solid #363636;border-radius:4px;box-sizing:border-box;"></div>
<div class="t" style="left:70px;top:493.89px;font-size:11px;color:#c0c0c0;">IA_MouseRight</div>
<svg class="a" style="left:228.1px;top:496px" width="11.5" height="7.5" viewBox="228.1 496 11.5 7.5"><path d="M229.6,497.5 L233.85,502.2 L238.1,497.5" fill="none" stroke="#c0c0c0" stroke-width="1.65"/></svg>
<svg class="a" style="left:259.6px;top:491px" width="18" height="18" viewBox="259.6 491 18 18"><path d="M274.75,496.87 A6.9,6.9 0 1 0 274.75,503.13" fill="none" stroke="#c0c0c0" stroke-width="1.4"/><path d="M264.8,500 H276.20000000000005" stroke="#c0c0c0" stroke-width="2"/><path d="M269.20000000000005,495.7 L264.8,500 L269.20000000000005,504.3" fill="none" stroke="#c0c0c0" stroke-width="2"/></svg>
<svg class="a" style="left:286px;top:491px" width="18" height="18" viewBox="286 491 18 18"><path d="M287,492 H292.8 L295,494.7 H302.2 V506 H287 Z" fill="#c0c0c0"/><circle cx="298.8" cy="502" r="4.6" fill="#282828"/><circle cx="298.8" cy="502" r="3.3" fill="none" stroke="#c0c0c0" stroke-width="1.3"/><path d="M296.5,504.6 L293.8,507.5" stroke="#282828" stroke-width="3"/><path d="M296.5,504.6 L293.8,507.5" stroke="#c0c0c0" stroke-width="1.2"/></svg>
<svg class="a" style="left:318px;top:491px" width="18" height="18" viewBox="318 491 18 18"><circle cx="327" cy="500" r="6.7" fill="none" stroke="#c0c0c0" stroke-width="1.4"/><path d="M323.9,500 H330.1 M327,496.9 V503.1" stroke="#c0c0c0" stroke-width="1.9"/></svg>
<svg class="a" style="left:344px;top:490px" width="19" height="19" viewBox="344 490 19 19"><path d="M350.2,494 C350.2,492.6 351,492 353.1,492 C355.2,492 356,492.6 356,494 Z" fill="#c0c0c0"/><rect x="346" y="494.8" width="14.3" height="2.2" fill="#c0c0c0"/><path d="M348.7,498.2 L349.4,506.2 H356.9 L357.6,498.2" fill="none" stroke="#c0c0c0" stroke-width="1.7"/></svg>
<div class="a" style="left:4px;top:514px;width:16px;height:27px;background:linear-gradient(90deg,#262626 0%,#262626 70%,#1c1c1c 100%);"></div>
<div class="a" style="left:19px;top:514px;width:1px;height:27px;background:#1a1a1a;"></div>
<div class="a" style="left:4px;top:540px;width:16px;height:1px;background:#1a1a1a;"></div>
<div class="a" style="left:20px;top:514px;width:16px;height:27px;background:linear-gradient(90deg,#262626 0%,#262626 70%,#1c1c1c 100%);"></div>
<div class="a" style="left:35px;top:514px;width:1px;height:27px;background:#1a1a1a;"></div>
<div class="a" style="left:20px;top:540px;width:16px;height:1px;background:#1a1a1a;"></div>
<div class="a" style="left:36px;top:514px;width:1084px;height:26px;background:#282828;"></div>
<div class="a" style="left:36px;top:540px;width:1084px;height:1px;background:#1a1a1a;"></div>
<svg class="a" style="left:45px;top:522.5px" width="6" height="10" viewBox="0 0 6 10"><path d="M0,0 V10 L6,5 Z" fill="#8a8a8a"/></svg>
<div class="a" style="left:62px;top:516px;width:190px;height:22px;background:#0f0f0f;border:1px solid #363636;border-radius:4px;box-sizing:border-box;"></div>
<div class="t" style="left:70px;top:520.89px;font-size:11px;color:#c0c0c0;">IA_View</div>
<svg class="a" style="left:228.1px;top:523px" width="11.5" height="7.5" viewBox="228.1 523 11.5 7.5"><path d="M229.6,524.5 L233.85,529.2 L238.1,524.5" fill="none" stroke="#c0c0c0" stroke-width="1.65"/></svg>
<svg class="a" style="left:259.6px;top:518px" width="18" height="18" viewBox="259.6 518 18 18"><path d="M274.75,523.87 A6.9,6.9 0 1 0 274.75,530.13" fill="none" stroke="#c0c0c0" stroke-width="1.4"/><path d="M264.8,527 H276.20000000000005" stroke="#c0c0c0" stroke-width="2"/><path d="M269.20000000000005,522.7 L264.8,527 L269.20000000000005,531.3" fill="none" stroke="#c0c0c0" stroke-width="2"/></svg>
<svg class="a" style="left:286px;top:518px" width="18" height="18" viewBox="286 518 18 18"><path d="M287,519 H292.8 L295,521.7 H302.2 V533 H287 Z" fill="#c0c0c0"/><circle cx="298.8" cy="529" r="4.6" fill="#282828"/><circle cx="298.8" cy="529" r="3.3" fill="none" stroke="#c0c0c0" stroke-width="1.3"/><path d="M296.5,531.6 L293.8,534.5" stroke="#282828" stroke-width="3"/><path d="M296.5,531.6 L293.8,534.5" stroke="#c0c0c0" stroke-width="1.2"/></svg>
<svg class="a" style="left:318px;top:518px" width="18" height="18" viewBox="318 518 18 18"><circle cx="327" cy="527" r="6.7" fill="none" stroke="#c0c0c0" stroke-width="1.4"/><path d="M323.9,527 H330.1 M327,523.9 V530.1" stroke="#c0c0c0" stroke-width="1.9"/></svg>
<svg class="a" style="left:344px;top:517px" width="19" height="19" viewBox="344 517 19 19"><path d="M350.2,521 C350.2,519.6 351,519 353.1,519 C355.2,519 356,519.6 356,521 Z" fill="#c0c0c0"/><rect x="346" y="521.8" width="14.3" height="2.2" fill="#c0c0c0"/><path d="M348.7,525.2 L349.4,533.2 H356.9 L357.6,525.2" fill="none" stroke="#c0c0c0" stroke-width="1.7"/></svg>
<div class="a" style="left:4px;top:541px;width:16px;height:27px;background:linear-gradient(90deg,#262626 0%,#262626 70%,#1c1c1c 100%);"></div>
<div class="a" style="left:19px;top:541px;width:1px;height:27px;background:#1a1a1a;"></div>
<div class="a" style="left:4px;top:567px;width:16px;height:1px;background:#1a1a1a;"></div>
<div class="a" style="left:20px;top:541px;width:16px;height:27px;background:linear-gradient(90deg,#262626 0%,#262626 70%,#1c1c1c 100%);"></div>
<div class="a" style="left:35px;top:541px;width:1px;height:27px;background:#1a1a1a;"></div>
<div class="a" style="left:20px;top:567px;width:16px;height:1px;background:#1a1a1a;"></div>
<div class="a" style="left:36px;top:541px;width:1084px;height:26px;background:#282828;"></div>
<div class="a" style="left:36px;top:567px;width:1084px;height:1px;background:#1a1a1a;"></div>
<svg class="a" style="left:45px;top:549.5px" width="6" height="10" viewBox="0 0 6 10"><path d="M0,0 V10 L6,5 Z" fill="#8a8a8a"/></svg>
<div class="a" style="left:62px;top:543px;width:190px;height:22px;background:#0f0f0f;border:1px solid #363636;border-radius:4px;box-sizing:border-box;"></div>
<div class="t" style="left:70px;top:547.89px;font-size:11px;color:#c0c0c0;">IA_Sequence</div>
<svg class="a" style="left:228.1px;top:550px" width="11.5" height="7.5" viewBox="228.1 550 11.5 7.5"><path d="M229.6,551.5 L233.85,556.2 L238.1,551.5" fill="none" stroke="#c0c0c0" stroke-width="1.65"/></svg>
<svg class="a" style="left:259.6px;top:545px" width="18" height="18" viewBox="259.6 545 18 18"><path d="M274.75,550.87 A6.9,6.9 0 1 0 274.75,557.13" fill="none" stroke="#c0c0c0" stroke-width="1.4"/><path d="M264.8,554 H276.20000000000005" stroke="#c0c0c0" stroke-width="2"/><path d="M269.20000000000005,549.7 L264.8,554 L269.20000000000005,558.3" fill="none" stroke="#c0c0c0" stroke-width="2"/></svg>
<svg class="a" style="left:286px;top:545px" width="18" height="18" viewBox="286 545 18 18"><path d="M287,546 H292.8 L295,548.7 H302.2 V560 H287 Z" fill="#c0c0c0"/><circle cx="298.8" cy="556" r="4.6" fill="#282828"/><circle cx="298.8" cy="556" r="3.3" fill="none" stroke="#c0c0c0" stroke-width="1.3"/><path d="M296.5,558.6 L293.8,561.5" stroke="#282828" stroke-width="3"/><path d="M296.5,558.6 L293.8,561.5" stroke="#c0c0c0" stroke-width="1.2"/></svg>
<svg class="a" style="left:318px;top:545px" width="18" height="18" viewBox="318 545 18 18"><circle cx="327" cy="554" r="6.7" fill="none" stroke="#c0c0c0" stroke-width="1.4"/><path d="M323.9,554 H330.1 M327,550.9 V557.1" stroke="#c0c0c0" stroke-width="1.9"/></svg>
<svg class="a" style="left:344px;top:544px" width="19" height="19" viewBox="344 544 19 19"><path d="M350.2,548 C350.2,546.6 351,546 353.1,546 C355.2,546 356,546.6 356,548 Z" fill="#c0c0c0"/><rect x="346" y="548.8" width="14.3" height="2.2" fill="#c0c0c0"/><path d="M348.7,552.2 L349.4,560.2 H356.9 L357.6,552.2" fill="none" stroke="#c0c0c0" stroke-width="1.7"/></svg>
<div class="a" style="left:4px;top:568px;width:1116px;height:26px;background:#232323;"></div>
<div class="a" style="left:4px;top:594px;width:1116px;height:1px;background:#1a1a1a;"></div>
<div class="a" style="left:768px;top:568px;width:1px;height:26px;background:#1a1a1a;"></div>
<div class="t" style="left:26px;top:575.11px;font-size:11.45px;color:#c0c0c0;">Mapping Profile Overrides</div>
<div class="t" style="left:781px;top:574.78px;font-size:11.37px;color:#c0c0c0;">0 Map elements</div>
<svg class="a" style="left:905px;top:571.7px" width="18" height="18" viewBox="905 571.7 18 18"><circle cx="914" cy="580.7" r="6.7" fill="none" stroke="#c0c0c0" stroke-width="1.4"/><path d="M910.9,580.7 H917.1 M914,577.6 V583.8000000000001" stroke="#c0c0c0" stroke-width="1.9"/></svg>
<svg class="a" style="left:931.3px;top:571px" width="19" height="19" viewBox="931.3 571 19 19"><path d="M937.5,575 C937.5,573.6 938.3,573 940.4,573 C942.5,573 943.3,573.6 943.3,575 Z" fill="#c0c0c0"/><rect x="933.3" y="575.8" width="14.3" height="2.2" fill="#c0c0c0"/><path d="M936.0,579.2 L936.6999999999999,587.2 H944.1999999999999 L944.9,579.2" fill="none" stroke="#c0c0c0" stroke-width="1.7"/></svg>
<div class="a" style="left:4px;top:595px;width:1116px;height:26px;background:#2f2f2f;"></div>
<div class="a" style="left:4px;top:621px;width:1116px;height:1px;background:#1a1a1a;"></div>
<svg class="a" style="left:9px;top:605px" width="10" height="6" viewBox="0 0 10 6"><path d="M0,0 H10 L5,6 Z" fill="#8a8a8a"/></svg>
<div class="t" style="left:26px;top:601.69px;font-size:11px;color:#c8c8c8;font-weight:700;letter-spacing:-0.28px;">Input Modes</div>
<div class="a" style="left:4px;top:622px;width:1116px;height:26px;background:#232323;"></div>
<div class="a" style="left:4px;top:648px;width:1116px;height:1px;background:#1a1a1a;"></div>
<div class="a" style="left:768px;top:622px;width:1px;height:26px;background:#1a1a1a;"></div>
<div class="t" style="left:26px;top:629.11px;font-size:11.45px;color:#c0c0c0;">Input Mode Filter Options</div>
<div class="a" style="left:4px;top:649px;width:1116px;height:26px;background:#2f2f2f;"></div>
<div class="a" style="left:4px;top:675px;width:1116px;height:1px;background:#1a1a1a;"></div>
<svg class="a" style="left:9px;top:659px" width="10" height="6" viewBox="0 0 10 6"><path d="M0,0 H10 L5,6 Z" fill="#8a8a8a"/></svg>
<div class="t" style="left:26px;top:655.69px;font-size:11px;color:#c8c8c8;font-weight:700;letter-spacing:-0.28px;">Registration</div>
<div class="a" style="left:4px;top:676px;width:1116px;height:26px;background:#232323;"></div>
<div class="a" style="left:4px;top:702px;width:1116px;height:1px;background:#1a1a1a;"></div>
<div class="a" style="left:768px;top:676px;width:1px;height:26px;background:#1a1a1a;"></div>
<div class="t" style="left:26px;top:683.11px;font-size:11.45px;color:#c0c0c0;">Registration Tracking Mode</div>
<div class="a" style="left:4px;top:703px;width:1116px;height:26px;background:#2f2f2f;"></div>
<div class="a" style="left:4px;top:729px;width:1116px;height:1px;background:#1a1a1a;"></div>
<svg class="a" style="left:9px;top:713px" width="10" height="6" viewBox="0 0 10 6"><path d="M0,0 H10 L5,6 Z" fill="#8a8a8a"/></svg>
<div class="t" style="left:26px;top:709.69px;font-size:11px;color:#c8c8c8;font-weight:700;letter-spacing:-0.28px;">Description</div>
<div class="a" style="left:4px;top:730px;width:1116px;height:26px;background:#232323;"></div>
<div class="a" style="left:768px;top:730px;width:1px;height:26px;background:#1a1a1a;"></div>
<div class="t" style="left:26px;top:737.11px;font-size:11.45px;color:#c0c0c0;">Description</div>
<div class="a" style="left:781px;top:624px;width:166px;height:21px;background:#0f0f0f;border:1px solid #363636;border-radius:4px;box-sizing:border-box;"></div>
<div class="t" style="left:789px;top:629.14px;font-size:11.18px;color:#c0c0c0;">Use Project Default Query</div>
<svg class="a" style="left:923.5px;top:631px" width="11.5" height="7.5" viewBox="923.5 631 11.5 7.5"><path d="M925.0,632.5 L929.25,637.2 L933.5,632.5" fill="none" stroke="#c0c0c0" stroke-width="1.65"/></svg>
<div class="a" style="left:781px;top:678px;width:125px;height:22px;background:#0f0f0f;border:1px solid #363636;border-radius:4px;box-sizing:border-box;"></div>
<div class="t" style="left:789px;top:683.14px;font-size:11.18px;color:#c0c0c0;">Untracked</div>
<svg class="a" style="left:882.3px;top:685px" width="11.5" height="7.5" viewBox="882.3 685 11.5 7.5"><path d="M883.8,686.5 L888.05,691.2 L892.3,686.5" fill="none" stroke="#c0c0c0" stroke-width="1.65"/></svg>
<div class="a" style="left:781px;top:733px;width:97px;height:20px;background:#0f0f0f;border:1px solid #363636;border-radius:4px;box-sizing:border-box;"></div>
<svg class="a" style="left:884px;top:735px" width="18" height="18" viewBox="884 735 18 18">
<path d="M886.5,737 V751" stroke="#c8c8c8" stroke-width="1.4" stroke-linecap="round"/>
<path d="M888.1,738 C889.5,736 891.5,735.6 893,736.6 C894.5,737.6 895.8,738.9 897.2,738.4 C898,738.1 898.6,737.8 899.1,737.6 V747.6 C898,748.2 896.8,748.4 895.5,747.8 C894,747 892.8,745.2 891,745.1 C889.8,745 888.9,745.8 888.1,746.6 Z" fill="#7a7a7a"/>
</svg>
<div class="a" style="left:116px;top:241px;width:137px;height:34px;background:#f0f0f0;border:1px solid #000;box-sizing:border-box;box-shadow:1px 1px 0 #000;"></div>
<div class="t" style="left:126px;top:252.04px;font-size:12.48px;color:#111111;">Adds Action Mapping</div>
</body></html>
